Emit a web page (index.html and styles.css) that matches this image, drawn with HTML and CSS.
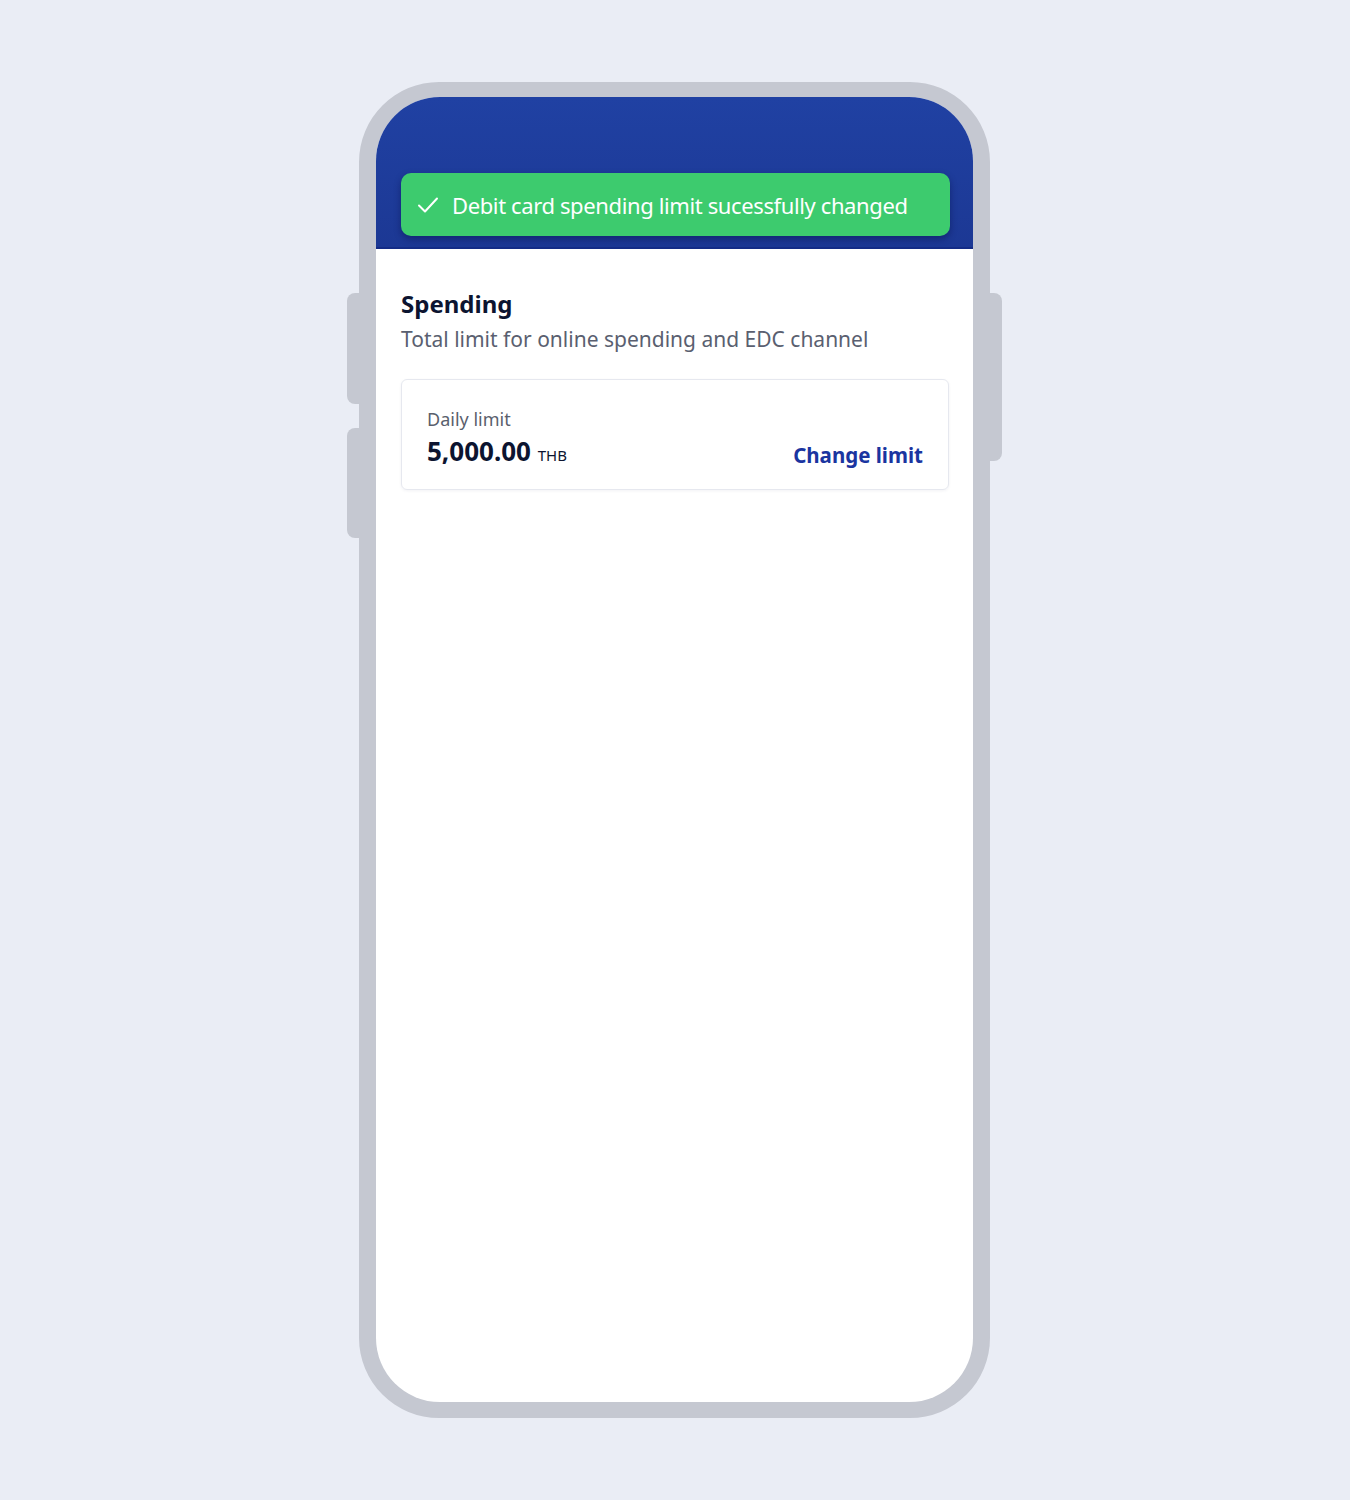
FILE: index.html
```html
<!DOCTYPE html>
<html lang="en">
<head>
    <meta charset="UTF-8">
    <meta name="viewport" content="width=device-width, initial-scale=1.0">
    <title>Spending limit</title>
    <link rel="stylesheet" href="styles.css">
</head>
<body>

<div class="phone">
    <div class="side-btn left-top"></div>
    <div class="side-btn left-bottom"></div>
    <div class="side-btn right"></div>

    <div class="screen">
        <div class="topbar">
            <div class="toast">
                <svg class="toast-icon" width="22" height="22" viewBox="0 0 22 22">
                    <path d="M2 11.5 L8 17.5 L20 4.5" fill="none" stroke="#fff" stroke-width="2" stroke-linecap="round" stroke-linejoin="round"/>
                </svg>
                <span>Debit card spending limit sucessfully changed</span>
            </div>
        </div>

        <div class="content">
            <h2 class="title">Spending</h2>
            <p class="subtitle">Total limit for online spending and EDC channel</p>

            <div class="limit-card">
                <div class="limit-info">
                    <div class="limit-label">Daily limit</div>
                    <div class="limit-amount">5,000.00 <span class="currency">THB</span></div>
                </div>
                <a class="change-link" href="#">Change limit</a>
            </div>
        </div>
    </div>
</div>

</body>
</html>
```

FILE: styles.css
```css
body {
    margin: 0;
    font-family: 'Noto Sans', sans-serif;
    background-color: #eaedf5;
    display: flex;
    justify-content: center;
    padding-top: 82px;
    min-height: 1500px;
    box-sizing: border-box;
}

.phone {
    position: relative;
    width: 631px;
    height: 1336px;
    box-sizing: border-box;
    border: 17px solid #c5c8d1;
    border-top-width: 15px;
    border-bottom-width: 16px;
    border-radius: 80px;
    background-color: #c5c8d1;
    margin-left: -1px;
}

.side-btn {
    position: absolute;
    width: 14px;
    background-color: #c5c8d1;
}

.left-top {
    left: -29px;
    top: 196px;
    height: 111px;
    border-radius: 8px 0 0 8px;
}

.left-bottom {
    left: -29px;
    top: 331px;
    height: 110px;
    border-radius: 8px 0 0 8px;
}

.right {
    right: -29px;
    top: 196px;
    height: 168px;
    border-radius: 0 8px 8px 0;
}

.screen {
    height: 100%;
    background-color: #fff;
    border-radius: 64px;
    overflow: hidden;
}

.topbar {
    height: 152px;
    background: linear-gradient(180deg, #2041a3, #1c3894);
    border-bottom: 2px solid #142c86;
    box-sizing: border-box;
    padding: 76px 23px 0 25px;
}

.toast {
    display: flex;
    align-items: center;
    gap: 13px;
    height: 63px;
    padding: 0 16px;
    background-color: #3dcb6e;
    border-radius: 10px;
    box-shadow: 0 3px 7px rgba(0, 10, 60, 0.4);
    color: #fff;
    font-size: 22px;
    letter-spacing: -0.38px;
}

.toast-icon {
    flex-shrink: 0;
}

.content {
    padding: 39px 24px 0 25px;
}

.title {
    margin: 0;
    font-size: 24px;
    font-weight: 700;
    color: #0c1430;
    line-height: 32px;
}

.subtitle {
    margin: 4px 0 0;
    font-size: 21px;
    color: #5a5f70;
    line-height: 30px;
}

.limit-card {
    margin-top: 25px;
    height: 111px;
    box-sizing: border-box;
    border: 1.5px solid #e6e8ef;
    border-radius: 6px;
    box-shadow: 0 1px 3px rgba(30, 40, 80, 0.06);
    display: flex;
    align-items: center;
    justify-content: space-between;
    padding: 0 25px 0 25px;
}

.limit-info {
    margin-top: 8px;
}

.limit-label {
    font-size: 18px;
    color: #5a5f6d;
    line-height: 24px;
}

.limit-amount {
    margin-top: 5px;
    font-size: 26px;
    font-weight: 700;
    color: #0c1430;
    line-height: 30px;
}

.currency {
    font-size: 15px;
    font-weight: 400;
}

.change-link {
    margin-top: 40px;
    font-size: 20.5px;
    font-weight: 700;
    color: #1a35a0;
    text-decoration: none;
}
```
